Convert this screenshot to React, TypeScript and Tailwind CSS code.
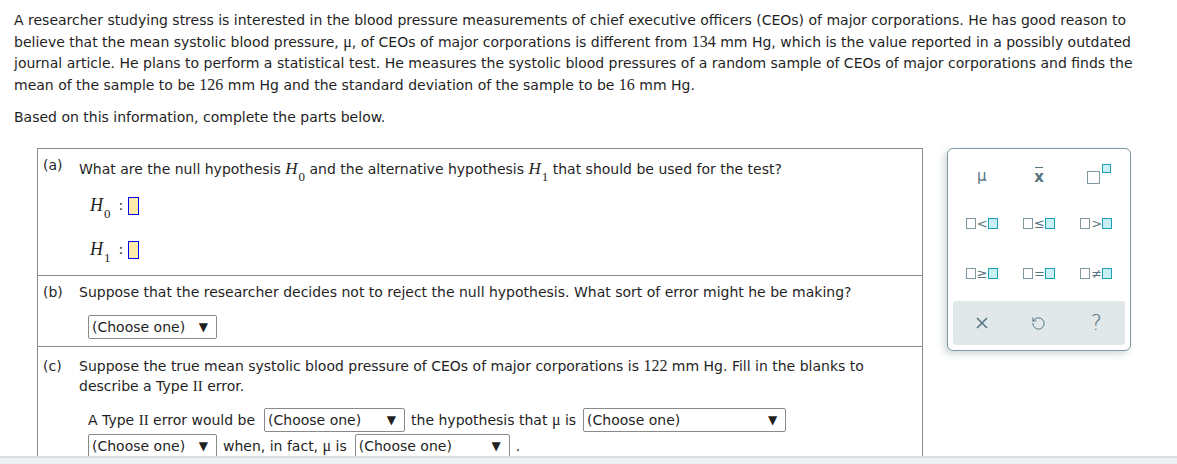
import React from "react";
import { RotateCcw } from "lucide-react";

const Num = ({ children }: { children: React.ReactNode }) => (
  <span className="font-['Liberation_Serif',serif] text-[16px]">{children}</span>
);

const Mu = () => <span className="font-['Liberation_Serif',serif] text-[16px]">μ</span>;

const H = ({ sub, big }: { sub: string; big?: boolean }) => (
  <span className={`font-['Liberation_Serif',serif] italic ${big ? "text-[18px]" : "text-[17px]"}`}>
    H<sub className="not-italic text-[13px] align-[-4px] ml-[1px]">{sub}</sub>
  </span>
);

const Select = ({ w }: { w: string }) => (
  <span
    className={`inline-flex items-center justify-between h-[24px] border border-[#8a8a8a] rounded-[2px] pl-[3px] pr-[8px] align-middle ${w}`}
  >
    <span>(Choose one)</span>
    <span className="text-[12px]">▼</span>
  </span>
);

const Empty = () => <span className="inline-block w-[10px] h-[11px] border-[1.5px] border-[#8197a0] bg-white" />;
const Filled = () => <span className="inline-block w-[10px] h-[11px] border-[1.5px] border-[#1a9fb3] bg-[#c9eef4]" />;

const Rel = ({ sym }: { sym: string }) => (
  <span className="inline-flex items-center gap-[1px] text-[#557580] text-[13px] leading-none">
    <Empty />
    <span className="w-[10px] text-center">{sym}</span>
    <Filled />
  </span>
);

export default function App() {
  return (
    <div className="relative w-[1177px] h-[464px] overflow-hidden bg-white font-['DejaVu_Sans',sans-serif] text-[14px] text-[#1f1f1f]">
      <div className="pl-[14px] pt-[10px]">
        <p className="leading-[21px] whitespace-nowrap">
          A researcher studying stress is interested in the blood pressure measurements of chief executive officers (CEOs) of major corporations. He has good reason to
          <br />
          believe that the mean systolic blood pressure, <Mu />, of CEOs of major corporations is different from <Num>134</Num> mm Hg, which is the value reported in a possibly outdated
          <br />
          journal article. He plans to perform a statistical test. He measures the systolic blood pressures of a random sample of CEOs of major corporations and finds the
          <br />
          mean of the sample to be <Num>126</Num> mm Hg and the standard deviation of the sample to be <Num>16</Num> mm Hg.
        </p>
        <p className="mt-[11px] leading-[21px]">Based on this information, complete the parts below.</p>
      </div>

      <div className="flex items-start ml-[37px] mt-[20px]">
        <div className="w-[886px] border border-[#8c8c8c] border-b-0">
          {/* (a) */}
          <div className="h-[127px] border-b border-[#8c8c8c] pt-[6px]">
            <div className="flex">
              <span className="w-[41px] pl-[5px] text-[14px]">(a)</span>
              <span className="pt-[1px]">
                What are the null hypothesis <H sub="0" /> and the alternative hypothesis <H sub="1" /> that should be used for the test?
              </span>
            </div>
            <div className="pl-[52px] mt-[14px] flex flex-col gap-[24px]">
              <div className="flex items-center h-[20px]">
                <H sub="0" big />
                <span className="ml-[8px] mr-[5px]">:</span>
                <span className="inline-block w-[11px] h-[18px] border border-[#0000ff] bg-[#fdeaa8]" />
              </div>
              <div className="flex items-center h-[20px]">
                <H sub="1" big />
                <span className="ml-[8px] mr-[5px]">:</span>
                <span className="inline-block w-[11px] h-[18px] border border-[#0000ff] bg-[#fdeaa8]" />
              </div>
            </div>
          </div>
          {/* (b) */}
          <div className="h-[71px] border-b border-[#8c8c8c] pt-[6px]">
            <div className="flex">
              <span className="w-[41px] pl-[5px] text-[14px]">(b)</span>
              <span>Suppose that the researcher decides not to reject the null hypothesis. What sort of error might he be making?</span>
            </div>
            <div className="pl-[50px] mt-[12px]">
              <Select w="w-[129px]" />
            </div>
          </div>
          {/* (c) */}
          <div className="pt-[9px] pb-[20px]">
            <div className="flex">
              <span className="w-[41px] pl-[5px] text-[14px]">(c)</span>
              <span className="leading-[20px] whitespace-nowrap">
                Suppose the true mean systolic blood pressure of CEOs of major corporations is <Num>122</Num> mm Hg. Fill in the blanks to
                <br />
                describe a Type <span className="font-['Liberation_Serif',serif] text-[15px]">II</span> error.
              </span>
            </div>
            <div className="pl-[50px] mt-[12px] flex flex-col gap-[2px]">
              <div className="flex items-center gap-[6px]">
                <span className="mr-[3px]">
                  A Type <span className="font-['Liberation_Serif',serif] text-[15px]">II</span> error would be
                </span>
                <Select w="w-[141px]" />
                <span className="mr-[1px]">
                  the hypothesis that <Mu /> is
                </span>
                <Select w="w-[203px]" />
              </div>
              <div className="flex items-center gap-[6px]">
                <Select w="w-[129px]" />
                <span className="mr-[2px]">
                  when, in fact, <Mu /> is
                </span>
                <Select w="w-[155px]" />
                <span>.</span>
              </div>
            </div>
          </div>
        </div>

        <div className="ml-[24px] w-[184px] h-[203px] border border-[#7f99a2] rounded-[6px] bg-white shadow-[-3px_3px_6px_rgba(80,110,120,0.25)] flex flex-col px-[5px] pt-[5px] pb-[5px]">
          <div className="grid grid-cols-3 grid-rows-[44px_50px_50px] text-[#557580] items-center justify-items-center pb-[3px]">
            <span className="font-['DejaVu_Sans',sans-serif] text-[15px]">μ</span>
            <span className="relative text-[15px] font-semibold mt-[2px]">
              <span className="absolute left-[1px] right-[1px] top-[1px] h-[1.5px] bg-[#557580]" />
              x
            </span>
            <span className="relative inline-block w-[14px] h-[14px] mt-[2px] ml-[-4px]">
              <span className="absolute left-0 bottom-0 w-[13px] h-[13px] border-[1.5px] border-[#8197a0]" />
              <span className="absolute left-[15px] top-[-6px] w-[9px] h-[9px] border-[1.5px] border-[#1a9fb3] bg-[#c9eef4]" />
            </span>
            <Rel sym="<" />
            <Rel sym="≤" />
            <Rel sym=">" />
            <Rel sym="≥" />
            <Rel sym="=" />
            <Rel sym="≠" />
          </div>
          <div className="flex-1 bg-[#e0e8ea] rounded-[3px] grid grid-cols-3 items-center justify-items-center text-[#557580]">
            <svg width="14" height="14" viewBox="0 0 14 14" fill="none" stroke="#557580" strokeWidth="1.6">
              <path d="M2 2 L12 12 M12 2 L2 12" />
            </svg>
            <RotateCcw size={15} strokeWidth={1.6} color="#557580" />
            <span className="text-[21px] font-['DejaVu_Sans',sans-serif] font-extralight leading-none text-[#4f6f7a]">?</span>
          </div>
        </div>
      </div>

      <div className="absolute left-0 right-0 bottom-0 h-[8px] bg-[#eef1f2] border-t-[2px] border-[#d6dde0]" />
    </div>
  );
}
